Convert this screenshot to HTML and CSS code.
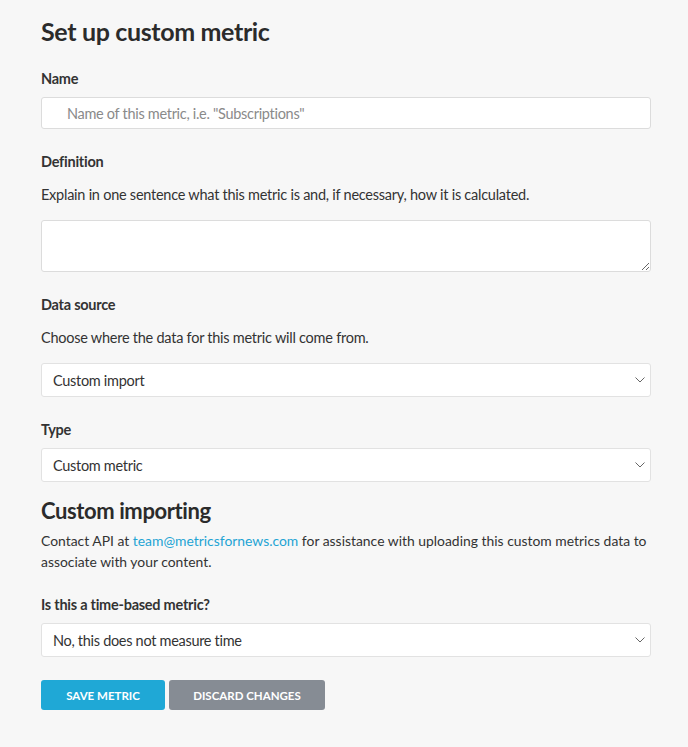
FILE: index.html
```html
<!DOCTYPE html>
<html lang="en">
<head>
<meta charset="utf-8">
<title>Set up custom metric</title>
<link rel="stylesheet" href="styles.css">
</head>
<body>
<main class="page">
  <h1 class="title">Set up custom metric</h1>

  <div class="field field-name">
    <label class="label" for="name">Name</label>
    <input class="input" id="name" type="text" placeholder="Name of this metric, i.e. &quot;Subscriptions&quot;">
  </div>

  <div class="field">
    <label class="label" for="def">Definition</label>
    <p class="help">Explain in one sentence what this metric is and, if necessary, how it is calculated.</p>
    <textarea class="textarea" id="def"></textarea>
  </div>

  <div class="field">
    <label class="label">Data source</label>
    <p class="help">Choose where the data for this metric will come from.</p>
    <div class="select">
      <span>Custom import</span>
      <svg class="chev" width="10" height="6" viewBox="0 0 10 6"><path d="M0.5 0.5 L5 5 L9.5 0.5" fill="none" stroke="#666" stroke-width="1"/></svg>
    </div>
  </div>

  <div class="field field-type">
    <label class="label">Type</label>
    <div class="select">
      <span>Custom metric</span>
      <svg class="chev" width="10" height="6" viewBox="0 0 10 6"><path d="M0.5 0.5 L5 5 L9.5 0.5" fill="none" stroke="#666" stroke-width="1"/></svg>
    </div>
  </div>

  <h2 class="subtitle">Custom importing</h2>
  <p class="para">Contact API at <a class="link" href="#">team@metricsfornews.com</a> for assistance with uploading this custom metrics data to associate with your content.</p>

  <div class="field field-time">
    <label class="label">Is this a time-based metric?</label>
    <div class="select">
      <span>No, this does not measure time</span>
      <svg class="chev" width="10" height="6" viewBox="0 0 10 6"><path d="M0.5 0.5 L5 5 L9.5 0.5" fill="none" stroke="#666" stroke-width="1"/></svg>
    </div>
  </div>

  <div class="actions">
    <button class="btn btn-primary" type="button">Save metric</button>
    <button class="btn btn-secondary" type="button">Discard changes</button>
  </div>
</main>
</body>
</html>
```

FILE: styles.css
```css
* { box-sizing: border-box; }
html, body { margin: 0; padding: 0; background: #f7f7f7; }
body {
  font-family: "Lato", "Liberation Sans", sans-serif;
  color: #333;
}
.page {
  width: 651px;
  padding: 16px 0 0 41px;
}
.title {
  margin: 0;
  font-size: 25px;
  line-height: 30px;
  font-weight: 700;
  letter-spacing: -0.35px;
  color: #2b2b2b;
}
.field { display: flex; flex-direction: column; }
.label {
  display: block;
  font-size: 14.5px;
  font-weight: 700;
  line-height: 20px;
  letter-spacing: -0.25px;
  padding-top: 1px;
  margin-bottom: -1px;
  color: #333;
}
.field-name { margin-top: 22px; }
.field-name .label { margin-bottom: 8px; }
.input {
  height: 32px;
  width: 610px;
  border: 1px solid #dcdcdc;
  border-radius: 3px;
  background: #fff;
  padding: 0 0 0 25px;
  font: inherit;
  font-size: 14.5px;
  letter-spacing: -0.3px;
  color: #333;
  outline: none;
}
.input::placeholder { color: #8a8a8a; }
.help {
  margin: 13px 0 15px;
  font-size: 14.5px;
  line-height: 20px;
  letter-spacing: -0.25px;
  padding-top: 1px;
  color: #333;
}
.field + .field { margin-top: 22px; }
.textarea {
  display: block;
  height: 52px;
  width: 610px;
  border: 1px solid #dcdcdc;
  border-radius: 3px;
  background: #fff;
  resize: vertical;
  font: inherit;
  outline: none;
}
.select {
  height: 34px;
  width: 610px;
  border: 1px solid #e2e2e2;
  border-radius: 3px;
  background: #fff;
  display: flex;
  align-items: center;
  justify-content: space-between;
  padding: 0 5px 0 11px;
  font-size: 14.5px;
  letter-spacing: -0.3px;
  color: #333;
}
.field + .field.field-type { margin-top: 22px; }
.field-type .label { margin-bottom: 8px; }
.subtitle {
  margin: 15px 0 0;
  font-size: 22px;
  line-height: 28px;
  font-weight: 700;
  letter-spacing: -0.4px;
  color: #2b2b2b;
}
.para {
  margin: 5px 0 0;
  font-size: 13.9px;
  line-height: 21px;
  color: #333;
}
.link { color: #1ea4d4; text-decoration: none; }
.field-time { margin-top: 22px; }
.field-time .label { margin-bottom: 8px; }
.actions {
  display: flex;
  gap: 4px;
  margin-top: 23px;
}
.btn {
  height: 30px;
  border: 0;
  border-radius: 3px;
  color: #fff;
  font-family: inherit;
  font-size: 11.5px;
  font-weight: 700;
  letter-spacing: 0px;
  text-transform: uppercase;
  padding: 0;
}
.btn-primary { width: 124px; background: #1fa8d6; }
.btn-secondary { width: 156px; background: #868c94; }
```
